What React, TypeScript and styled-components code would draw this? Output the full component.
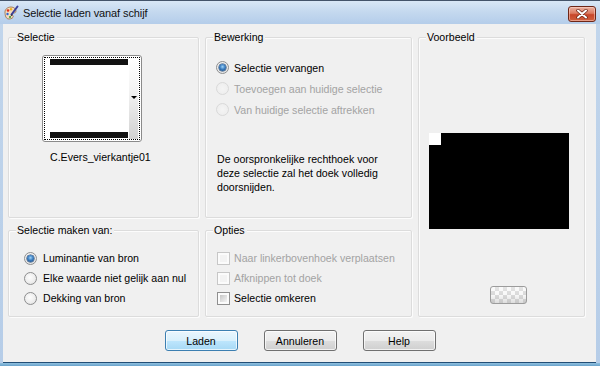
import React from 'react';
import styled, { createGlobalStyle } from 'styled-components';

const GlobalStyle = createGlobalStyle`
  html, body {
    margin: 0;
    padding: 0;
    background: #c9dbee;
  }
  body {
    font-family: 'Liberation Sans', Arial, sans-serif;
    font-size: 10.6px;
    color: #000;
  }
`;

const Window = styled.div`
  width: 600px;
  height: 366px;
  display: flex;
  flex-direction: column;
  box-sizing: border-box;
  background: linear-gradient(#c2d6ec, #b6cde8);
  border-top: 1px solid #44546a;
  overflow: hidden;
`;

const TitleBar = styled.div`
  height: 23px;
  display: flex;
  align-items: center;
  padding: 0 4px 0 3px;
  background: linear-gradient(#d9e7f6 0%, #c5d9ef 45%, #b4cdea 100%);
`;

const TitleText = styled.span`
  flex: 1;
  margin-left: 4px;
  font-size: 11px;
  color: #111;
  letter-spacing: -0.1px;
`;

const CloseButton = styled.div`
  width: 26px;
  height: 14px;
  margin-top: 2px;
  border: 1px solid #6e2718;
  border-radius: 3px;
  display: flex;
  align-items: center;
  justify-content: center;
  background: linear-gradient(#eab2a2 0%, #dc7a60 45%, #c8462a 55%, #d0603e 100%);
  box-shadow: inset 0 0 0 1px rgba(255, 220, 210, 0.5);
`;

const Body = styled.div`
  flex: 1;
  margin: 0 4px 0 3px;
  display: flex;
  flex-direction: column;
  background: #f0f0f0;
  border-bottom: 1px solid #234e76;
`;

const BottomEdge = styled.div`
  height: 3px;
  background: linear-gradient(#8fc0de, #6aa3cc);
`;

const Panels = styled.div`
  display: grid;
  grid-template-columns: 191px 207px 167px;
  grid-template-rows: 181px 87px;
  column-gap: 6px;
  row-gap: 12px;
  padding: 13px 0 0 5px;
`;

const Group = styled.div<{ $col: string; $row: string }>`
  position: relative;
  grid-column: ${(p) => p.$col};
  grid-row: ${(p) => p.$row};
  box-sizing: border-box;
  border: 1px solid #dcdcdc;
  border-radius: 2px;
  box-shadow: inset 1px 1px 0 #fcfcfc, 1px 1px 0 #fcfcfc;
  display: flex;
  flex-direction: column;
  align-items: flex-start;
`;

const Caption = styled.span`
  position: absolute;
  top: -7px;
  left: 7px;
  line-height: 13px;
  padding: 0 2px 0 1px;
  background: #f0f0f0;
`;

const OptionList = styled.div<{ $pad: string }>`
  display: flex;
  flex-direction: column;
  padding: ${(p) => p.$pad};
`;

const OptionRow = styled.label<{ $height: number; $disabled?: boolean; $gap: number }>`
  height: ${(p) => p.$height}px;
  display: flex;
  align-items: center;
  gap: ${(p) => p.$gap}px;
  color: ${(p) => (p.$disabled ? '#a3a3a3' : '#000')};
  white-space: nowrap;
`;

const Radio = styled.span<{ $checked?: boolean; $disabled?: boolean }>`
  position: relative;
  width: 13px;
  height: 13px;
  box-sizing: border-box;
  border-radius: 50%;
  border: 1px solid ${(p) => (p.$disabled ? '#d9d9d9' : '#8d8e8f')};
  background: ${(p) =>
    p.$disabled
      ? 'radial-gradient(circle at 50% 50%, #f4f4f4 0%, #ececec 100%)'
      : 'radial-gradient(circle at 45% 40%, #fdfdfd 0%, #ececec 60%, #d4d4d4 100%)'};
  flex: none;

  &::after {
    content: '';
    display: ${(p) => (p.$checked ? 'block' : 'none')};
    position: absolute;
    left: 2px;
    top: 2px;
    width: 7px;
    height: 7px;
    border-radius: 50%;
    background: radial-gradient(circle at 50% 40%, #9fd4f8 0%, #3d7fc1 45%, #123f76 100%);
    box-shadow: 0 0 0 0.5px #1b3d66;
  }
`;

const Check = styled.span<{ $disabled?: boolean }>`
  width: 13px;
  height: 13px;
  box-sizing: border-box;
  border: 1px solid ${(p) => (p.$disabled ? '#c7c7c7' : '#8f8f8f')};
  padding: 2px;
  background: #fbfbfb;
  flex: none;

  &::before {
    content: '';
    display: block;
    width: 100%;
    height: 100%;
    background: ${(p) =>
      p.$disabled ? '#f3f3f3' : 'linear-gradient(135deg, #c6c6c6 0%, #e2e2e2 60%, #f4f4f4 100%)'};
  }
`;

const SelectionBody = styled.div`
  display: flex;
  flex-direction: column;
  align-items: flex-start;
  padding: 17px 0 0 33px;
`;

const Thumb = styled.div`
  width: 100px;
  height: 87px;
  box-sizing: border-box;
  border: 1px solid #8a8a8a;
  border-radius: 3px;
  padding: 1px;
  background: #fff;
`;

const ThumbFocus = styled.div`
  height: 100%;
  box-sizing: border-box;
  border: 1px dotted #000;
  display: flex;
`;

const ThumbImage = styled.div`
  flex: 1;
  padding: 1px 0 0 5px;
  background: #fff;
`;

const ThumbBars = styled.div`
  width: 78px;
  height: 79px;
  box-sizing: border-box;
  border-top: 6px solid #121212;
  border-bottom: 6px solid #121212;
  background: #fff;
`;

const ThumbStrip = styled.div`
  width: 9px;
  margin: 0 1px 0 0;
  display: flex;
  align-items: flex-start;
  justify-content: center;
  padding-top: 38px;
  box-sizing: border-box;
  background: linear-gradient(#ffffff 0%, #f3f3f3 40%, #d2d2d2 100%);
`;

const ThumbArrow = styled.span`
  width: 0;
  height: 0;
  border-left: 3px solid transparent;
  border-right: 3px solid transparent;
  border-top: 3px solid #000;
`;

const FileName = styled.span`
  margin: 9px 0 0 8px;
  line-height: 13px;
`;

const Note = styled.p`
  margin: 32px 0 0 11px;
  line-height: 14px;
`;

const PreviewBody = styled.div`
  display: flex;
  flex-direction: column;
  align-items: flex-start;
  padding: 95px 0 0 10px;
`;

const PreviewCanvas = styled.div`
  width: 140px;
  height: 96px;
  background: #000;

  &::before {
    content: '';
    display: block;
    width: 12px;
    height: 12px;
    background: #fff;
  }
`;

const PreviewButton = styled.div`
  width: 37px;
  height: 18px;
  margin: 57px 0 0 61px;
  box-sizing: border-box;
  border: 1px solid #9c9c9c;
  border-radius: 3px;
  background:
    linear-gradient(rgba(255, 255, 255, 0.45) 0%, rgba(255, 255, 255, 0.2) 50%, rgba(190, 190, 190, 0.45) 100%),
    conic-gradient(#cfcfcf 25%, #f6f6f6 0 50%, #cfcfcf 0 75%, #f6f6f6 0) 0 0 / 8px 8px;
`;

const ButtonRow = styled.div`
  display: flex;
  justify-content: center;
  gap: 26px;
  margin-top: 13px;
  padding-left: 1px;
`;

const Button = styled.button<{ $default?: boolean }>`
  width: 73px;
  height: 21px;
  padding: 0;
  font-family: inherit;
  font-size: 10.6px;
  color: #000;
  border-radius: 3px;
  border: 1px solid ${(p) => (p.$default ? '#3c7fb1' : '#707070')};
  background: ${(p) =>
    p.$default
      ? 'linear-gradient(#eaf6fd 0%, #d9f0fc 50%, #bee6fd 51%, #a7d9f5 100%)'
      : 'linear-gradient(#f2f2f2 0%, #ebebeb 50%, #dddddd 51%, #cfcfcf 100%)'};
  box-shadow: inset 0 0 0 1px rgba(255, 255, 255, 0.7);
`;

const TitleIcon = () => (
  <svg width="16" height="16" viewBox="0 0 16 16">
    <path d="M2 7c0-3 3-5 6-5s5 2 5 4-2 2-3 2-1 2 0 3-1 3-4 3S2 11 2 7z" fill="#f2dcc0" stroke="#9a6a3e" strokeWidth="0.8" />
    <circle cx="5" cy="5.5" r="1.3" fill="#e0301c" />
    <circle cx="8" cy="4.2" r="1.2" fill="#f0b020" />
    <circle cx="4.5" cy="9" r="1.2" fill="#2f66d0" />
    <circle cx="7" cy="12" r="1.1" fill="#38a838" />
    <path d="M14.5 1.5L8.5 9.5" stroke="#3a3f9a" strokeWidth="2" strokeLinecap="round" />
    <path d="M8.8 9.2l-1.6 2.6 2.4-1.8z" fill="#202020" />
  </svg>
);

const CloseGlyph = () => (
  <svg width="12" height="10" viewBox="0 0 12 10">
    <path d="M2 1.5l8 7M10 1.5l-8 7" stroke="#6a2214" strokeWidth="3.4" strokeLinecap="round" />
    <path d="M2 1.5l8 7M10 1.5l-8 7" stroke="#ffffff" strokeWidth="2" strokeLinecap="round" />
  </svg>
);

const operations = [
  { label: 'Selectie vervangen', checked: true, disabled: false },
  { label: 'Toevoegen aan huidige selectie', checked: false, disabled: true },
  { label: 'Van huidige selectie aftrekken', checked: false, disabled: true },
];

const sources = [
  { label: 'Luminantie van bron', checked: true },
  { label: 'Elke waarde niet gelijk aan nul', checked: false },
  { label: 'Dekking van bron', checked: false },
];

const options = [
  { label: 'Naar linkerbovenhoek verplaatsen', disabled: true },
  { label: 'Afknippen tot doek', disabled: true },
  { label: 'Selectie omkeren', disabled: false },
];

export default function App() {
  return (
    <>
      <GlobalStyle />
      <Window>
        <TitleBar>
          <TitleIcon />
          <TitleText>Selectie laden vanaf schijf</TitleText>
          <CloseButton>
            <CloseGlyph />
          </CloseButton>
        </TitleBar>

        <Body>
          <Panels>
            <Group $col="1" $row="1">
              <Caption>Selectie</Caption>
              <SelectionBody>
                <Thumb>
                  <ThumbFocus>
                    <ThumbImage>
                      <ThumbBars />
                    </ThumbImage>
                    <ThumbStrip>
                      <ThumbArrow />
                    </ThumbStrip>
                  </ThumbFocus>
                </Thumb>
                <FileName>C.Evers_vierkantje01</FileName>
              </SelectionBody>
            </Group>

            <Group $col="2" $row="1">
              <Caption>Bewerking</Caption>
              <OptionList $pad="19px 0 0 10px">
                {operations.map((o) => (
                  <OptionRow key={o.label} $height={21} $gap={5} $disabled={o.disabled}>
                    <Radio $checked={o.checked} $disabled={o.disabled} />
                    {o.label}
                  </OptionRow>
                ))}
              </OptionList>
              <Note>
                De oorspronkelijke rechthoek voor
                <br />
                deze selectie zal het doek volledig
                <br />
                doorsnijden.
              </Note>
            </Group>

            <Group $col="3" $row="1 / span 2">
              <Caption>Voorbeeld</Caption>
              <PreviewBody>
                <PreviewCanvas />
                <PreviewButton />
              </PreviewBody>
            </Group>

            <Group $col="1" $row="2">
              <Caption>Selectie maken van:</Caption>
              <OptionList $pad="17px 0 0 15px">
                {sources.map((s) => (
                  <OptionRow key={s.label} $height={20} $gap={6}>
                    <Radio $checked={s.checked} />
                    {s.label}
                  </OptionRow>
                ))}
              </OptionList>
            </Group>

            <Group $col="2" $row="2">
              <Caption>Opties</Caption>
              <OptionList $pad="17px 0 0 11px">
                {options.map((o) => (
                  <OptionRow key={o.label} $height={20} $gap={4} $disabled={o.disabled}>
                    <Check $disabled={o.disabled} />
                    {o.label}
                  </OptionRow>
                ))}
              </OptionList>
            </Group>
          </Panels>

          <ButtonRow>
            <Button $default>Laden</Button>
            <Button>Annuleren</Button>
            <Button>Help</Button>
          </ButtonRow>
        </Body>
        <BottomEdge />
      </Window>
    </>
  );
}
